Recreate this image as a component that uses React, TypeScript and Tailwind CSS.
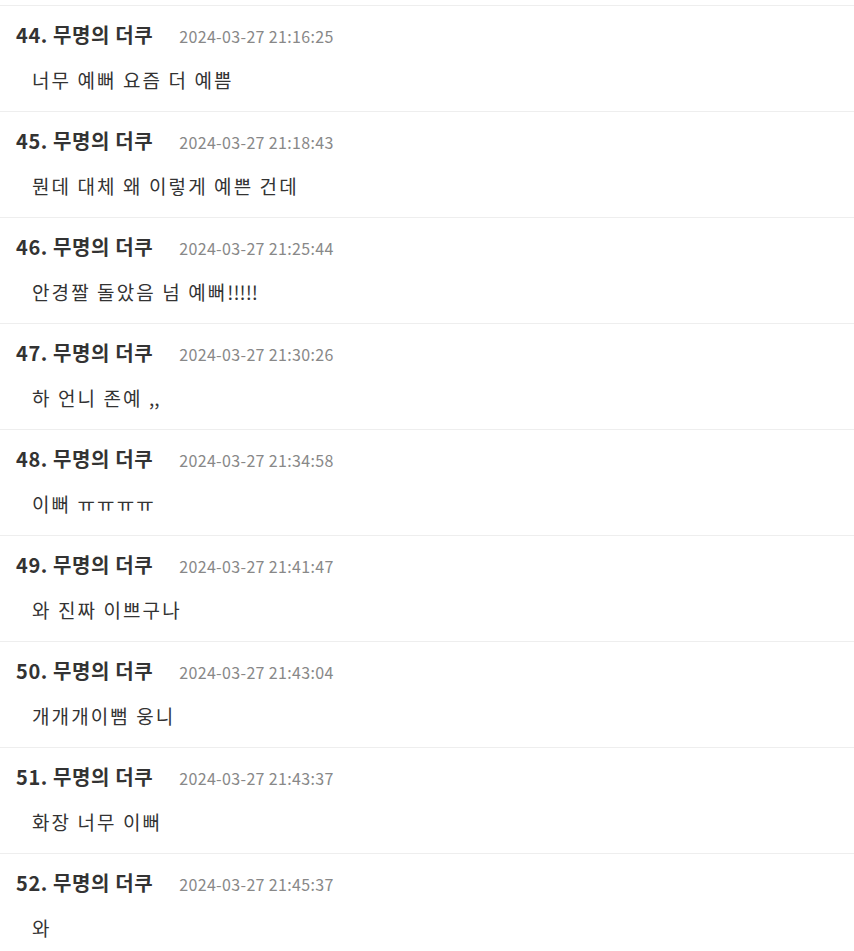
const comments = [
  { no: 44, date: "2024-03-27 21:16:25", text: "너무 예뻐 요즘 더 예쁨" },
  { no: 45, date: "2024-03-27 21:18:43", text: "뭔데 대체 왜 이렇게 예쁜 건데" },
  { no: 46, date: "2024-03-27 21:25:44", text: "안경짤 돌았음 넘 예뻐!!!!!" },
  { no: 47, date: "2024-03-27 21:30:26", text: "하 언니 존예 ,," },
  { no: 48, date: "2024-03-27 21:34:58", text: "이뻐 ㅠㅠㅠㅠ" },
  { no: 49, date: "2024-03-27 21:41:47", text: "와 진짜 이쁘구나" },
  { no: 50, date: "2024-03-27 21:43:04", text: "개개개이뻠 웅니" },
  { no: 51, date: "2024-03-27 21:43:37", text: "화장 너무 이뻐" },
  { no: 52, date: "2024-03-27 21:45:37", text: "와" },
];

// punctuation runs (!!!!!, ,,) keep normal spacing, hangul gets extra tracking
function Body({ text }: { text: string }) {
  const parts = text.split(/([!,]+)/).filter(Boolean);
  return (
    <>
      {parts.map((p, i) =>
        /^[!,]+$/.test(p) ? (
          <span key={i} className="tracking-normal">
            {p}
          </span>
        ) : (
          <span key={i}>{p}</span>
        )
      )}
    </>
  );
}

export default function App() {
  return (
    <div className="min-h-screen bg-white pt-[5px] font-['Noto_Sans_CJK_KR',sans-serif] text-[#333]">
      {comments.map((c) => (
        <div key={c.no} className="border-t border-[#eeeeee] px-4 pt-[17px] pb-[19px]">
          <div className="flex items-baseline h-6 leading-6">
            <span className="text-[20px] font-bold tracking-[0.6px]">
              {c.no}. 무명의 더쿠
            </span>
            <span className="ml-[26px] text-[16px] tracking-[0.35px] text-[#888]">{c.date}</span>
          </div>
          <div className="mt-[21px] pl-4 h-6 leading-6 text-[19px] tracking-[2.1px] font-normal text-[#333]">
            <Body text={c.text} />
          </div>
        </div>
      ))}
    </div>
  );
}
